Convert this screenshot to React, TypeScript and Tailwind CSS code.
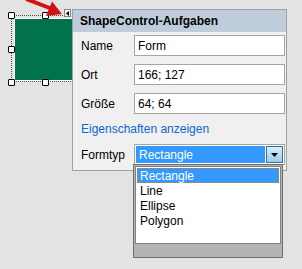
import React from "react";

const fields = [
  { label: "Name", value: "Form" },
  { label: "Ort", value: "166; 127" },
  { label: "Größe", value: "64; 64" },
];

const shapes = ["Rectangle", "Line", "Ellipse", "Polygon"];

function Handle({ x, y }: { x: number; y: number }) {
  return (
    <div
      className="absolute h-[7px] w-[7px] rounded-[1px] border border-black bg-white"
      style={{ left: x, top: y }}
    />
  );
}

export default function App() {
  return (
    <div
      className="relative h-[269px] w-[302px] overflow-hidden bg-[#e3e3e3] text-[12px] text-black"
      style={{ fontFamily: '"Liberation Sans", Arial, sans-serif' }}
    >
      {/* selected shape on the designer canvas */}
      <div className="absolute left-[11px] top-[15px] h-[67px] w-[62px] border border-dotted border-[#505050]" />
      <div className="absolute left-[14px] top-[18px] h-[63px] w-[70px] bg-white p-[1px]">
        <div className="h-full w-full bg-[#017249]" />
      </div>
      <Handle x={8} y={12} />
      <Handle x={42} y={12} />
      <Handle x={8} y={46} />
      <Handle x={8} y={79} />
      <Handle x={42} y={79} />

      {/* smart tag glyph */}
      <div className="absolute left-[64px] top-[9px] flex h-[8px] w-[7px] items-center justify-center border border-[#8a8a8a] bg-[#f4f4f4]">
        <svg width="3" height="5" viewBox="0 0 3 5">
          <path d="M3 0 L0 2.5 L3 5 Z" fill="#000" />
        </svg>
      </div>

      {/* tasks panel */}
      <div className="absolute left-[72px] top-[9px] flex h-[162px] w-[215px] flex-col border border-[#a0a0a0] bg-[#f0f0f0]">
        <div className="flex h-[22px] items-center bg-[#bfcddb] pl-[7px] font-bold">
          ShapeControl-Aufgaben
        </div>
        <div className="flex flex-col pt-[3px]">
          <div className="flex flex-col gap-[8px]">
            {fields.map((f) => (
              <div key={f.label} className="flex items-center">
                <span className="w-[61px] pl-[8px]">{f.label}</span>
                <div className="flex h-[21px] w-[151px] items-center border border-[#a5a5a5] bg-white pl-[3px]">
                  {f.value}
                </div>
              </div>
            ))}
          </div>
          <div className="mt-[7px] h-[16px] pl-[8px] leading-[16px] text-[#0f66cc]">
            Eigenschaften anzeigen
          </div>
          <div className="mt-[7px] flex items-center">
            <span className="w-[61px] pl-[8px]">Formtyp</span>
            <div className="flex h-[21px] w-[151px] items-center border border-[#a5a5a5] bg-white p-[1px]">
              <div className="flex h-full flex-1 items-center bg-[#3399ff] pl-[3px] text-white">
                Rectangle
              </div>
              <div className="ml-[1px] flex h-[17px] w-[17px] items-center justify-center border border-[#3c6f96] bg-gradient-to-b from-[#d7ecfa] to-[#9ccbed]">
                <svg width="7" height="4" viewBox="0 0 7 4">
                  <path d="M0 0 H7 L3.5 4 Z" fill="#000" />
                </svg>
              </div>
            </div>
          </div>
        </div>
      </div>

      {/* open drop-down list */}
      <div className="absolute left-[133px] top-[164px] flex h-[94px] w-[150px] flex-col border border-[#6e6e6e] bg-[#b4b4b4] p-[1px]">
        <div className="flex h-[78px] flex-col border border-[#828282] bg-white pt-[1px] pl-[1px] pr-[1px]">
          {shapes.map((s, i) =>
            i === 0 ? (
              <div
                key={s}
                className="flex h-[15px] items-center border border-dotted border-[#e07a16] bg-[#3399ff] pl-[2px] text-white"
              >
                {s}
              </div>
            ) : (
              <div key={s} className="flex h-[15px] items-center pl-[3px]">
                {s}
              </div>
            )
          )}
        </div>
      </div>

      {/* red annotation arrow */}
      <svg className="absolute left-0 top-0" width="80" height="30" viewBox="0 0 80 30">
        <line x1="26" y1="-1" x2="51" y2="8.5" stroke="#d01212" strokeWidth="4" />
        <path d="M62 14 L52 1.5 L46 16 Z" fill="#d01212" />
      </svg>
    </div>
  );
}
